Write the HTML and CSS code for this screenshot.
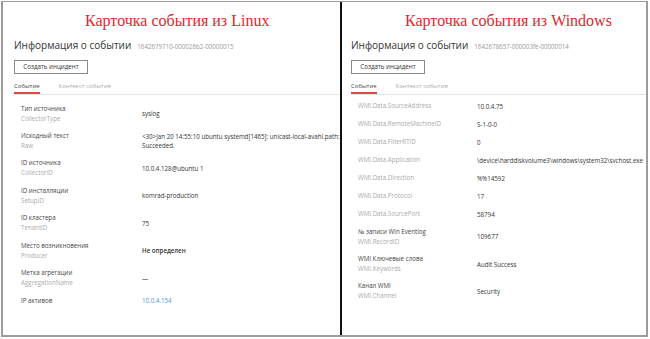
FILE: index.html
```html
<!DOCTYPE html>
<html lang="ru">
<head>
<meta charset="utf-8">
<link rel="stylesheet" href="styles.css">
</head>
<body>
<div class="frame">
  <section class="panel panel-linux">
    <h1 class="title">Карточка события из Linux</h1>
    <div class="head"><span class="head-title">Информация о событии</span><span class="head-id">1642679710-000026b2-00000015</span></div>
    <div class="btn">Создать инцидент</div>
    <div class="tabs"><span class="tab active">Событие</span><span class="tab">Контекст события</span></div>
    <div class="rows rows-linux">
      <div class="row"><div class="label"><div class="name">Тип источника</div><div class="key">CollectorType</div></div><div class="value">syslog</div></div>
      <div class="row"><div class="label"><div class="name">Исходный текст</div><div class="key">Raw</div></div><div class="value value-wrap">&lt;30&gt;Jan 20 14:55:10 ubuntu systemd[1465]: <span class="nobr">unicast-local-avahi.path:</span> Succeeded.</div></div>
      <div class="row"><div class="label"><div class="name">ID источника</div><div class="key">CollectorID</div></div><div class="value">10.0.4.128@ubuntu 1</div></div>
      <div class="row"><div class="label"><div class="name">ID инсталляции</div><div class="key">SetupID</div></div><div class="value">komrad-production</div></div>
      <div class="row"><div class="label"><div class="name">ID кластера</div><div class="key">TenantID</div></div><div class="value">75</div></div>
      <div class="row"><div class="label"><div class="name">Место возникновения</div><div class="key">Producer</div></div><div class="value value-bold">Не определен</div></div>
      <div class="row"><div class="label"><div class="name">Метка агрегации</div><div class="key">AggregationName</div></div><div class="value">—</div></div>
      <div class="row row-top"><div class="label"><div class="name">IP активов</div></div><div class="value value-link">10.0.4.154</div></div>
    </div>
  </section>
  <section class="panel panel-windows">
    <h1 class="title">Карточка события из Windows</h1>
    <div class="head"><span class="head-title">Информация о событии</span><span class="head-id">1642678657-000003fe-00000014</span></div>
    <div class="btn">Создать инцидент</div>
    <div class="tabs"><span class="tab active">Событие</span><span class="tab">Контекст события</span></div>
    <div class="rows rows-windows">
      <div class="row row-single"><div class="label"><div class="key">WMI.Data.SourceAddress</div></div><div class="value">10.0.4.75</div></div>
      <div class="row row-single"><div class="label"><div class="key">WMI.Data.RemoteMachineID</div></div><div class="value">S-1-0-0</div></div>
      <div class="row row-single"><div class="label"><div class="key">WMI.Data.FilterRTID</div></div><div class="value">0</div></div>
      <div class="row row-single"><div class="label"><div class="key">WMI.Data.Application</div></div><div class="value">\device\harddiskvolume3\windows\system32\svchost.exe</div></div>
      <div class="row row-single"><div class="label"><div class="key">WMI.Data.Direction</div></div><div class="value">%%14592</div></div>
      <div class="row row-single"><div class="label"><div class="key">WMI.Data.Protocol</div></div><div class="value">17</div></div>
      <div class="row row-single"><div class="label"><div class="key">WMI.Data.SourcePort</div></div><div class="value">58794</div></div>
      <div class="row"><div class="label"><div class="name">№ записи Win Eventlog</div><div class="key">WMI.RecordID</div></div><div class="value">109677</div></div>
      <div class="row"><div class="label"><div class="name">WMI Ключевые слова</div><div class="key">WMI.Keywords</div></div><div class="value">Audit Success</div></div>
      <div class="row"><div class="label"><div class="name">Канал WMI</div><div class="key">WMI.Channel</div></div><div class="value">Security</div></div>
    </div>
  </section>
</div>
</body>
</html>
```

FILE: styles.css
```css
* { box-sizing: border-box; }
html, body { margin: 0; padding: 0; background: #fff; }
body { font-family: "Open Sans", "Noto Sans", sans-serif; color: #333; }

.frame {
  margin: 1px 0 0 1px;
  width: 647px;
  height: 336px;
  border-style: solid;
  border-color: #9c9c9c;
  border-width: 1px 2px 2px 2px;
  display: flex;
}

.panel { overflow: hidden; }
.panel-linux { width: 337px; padding-left: 11px; }
.panel-windows { flex: 1; border-left: 2px solid #111; padding-left: 9px; }

.title {
  margin: 0;
  height: 36px;
  padding-top: 10px;
  font-family: "Liberation Serif", "Times New Roman", "DejaVu Serif", serif;
  font-weight: normal;
  font-size: 16px;
  line-height: 18px;
  color: #e3262b;
  white-space: nowrap;
}
.panel-linux .title { padding-left: 71px; }
.panel-windows .title { padding-left: 54px; }

.head { display: flex; align-items: baseline; height: 21px; white-space: nowrap; }
.head-title { font-size: 10px; color: #333; }
.head-id { font-size: 6.2px; color: #999; margin-left: 6px; }

.btn {
  width: 74px;
  height: 14px;
  margin-top: 1px;
  border: 1px solid #8a8a8a;
  font-size: 6.2px;
  line-height: 12px;
  text-align: center;
  color: #333;
}

.tabs {
  display: flex;
  gap: 19px;
  margin-top: 6px;
  height: 15px;
  border-bottom: 1px solid #e4e4e4;
}
.tab { font-size: 6px; line-height: 13px; color: #aaa; white-space: nowrap; }
.tab.active { color: #444; border-bottom: 2px solid #e0474c; }

.rows { padding-left: 7px; }
.rows-linux { padding-top: 5px; }
.rows-windows { padding-top: 2px; }
.row { display: flex; align-items: center; height: 27.4px; }
.row-single { height: 18px; }
.row-top { align-items: flex-start; padding-top: 4px; }
.row-top .value { line-height: 10px; }
.label { width: 121px; flex: none; }
.name { font-size: 6.2px; line-height: 10px; color: #444; white-space: nowrap; }
.key { font-size: 6.2px; line-height: 10px; color: #aaa; white-space: nowrap; }
.value { font-size: 6.2px; line-height: 9px; color: #333; white-space: nowrap; }
.value-wrap { white-space: normal; width: 230px; flex: none; }
.nobr { white-space: nowrap; }
.value-bold { font-weight: 600; }
.value-link { color: #4a9ad8; }
.rows-windows .label { width: 119px; }
```
